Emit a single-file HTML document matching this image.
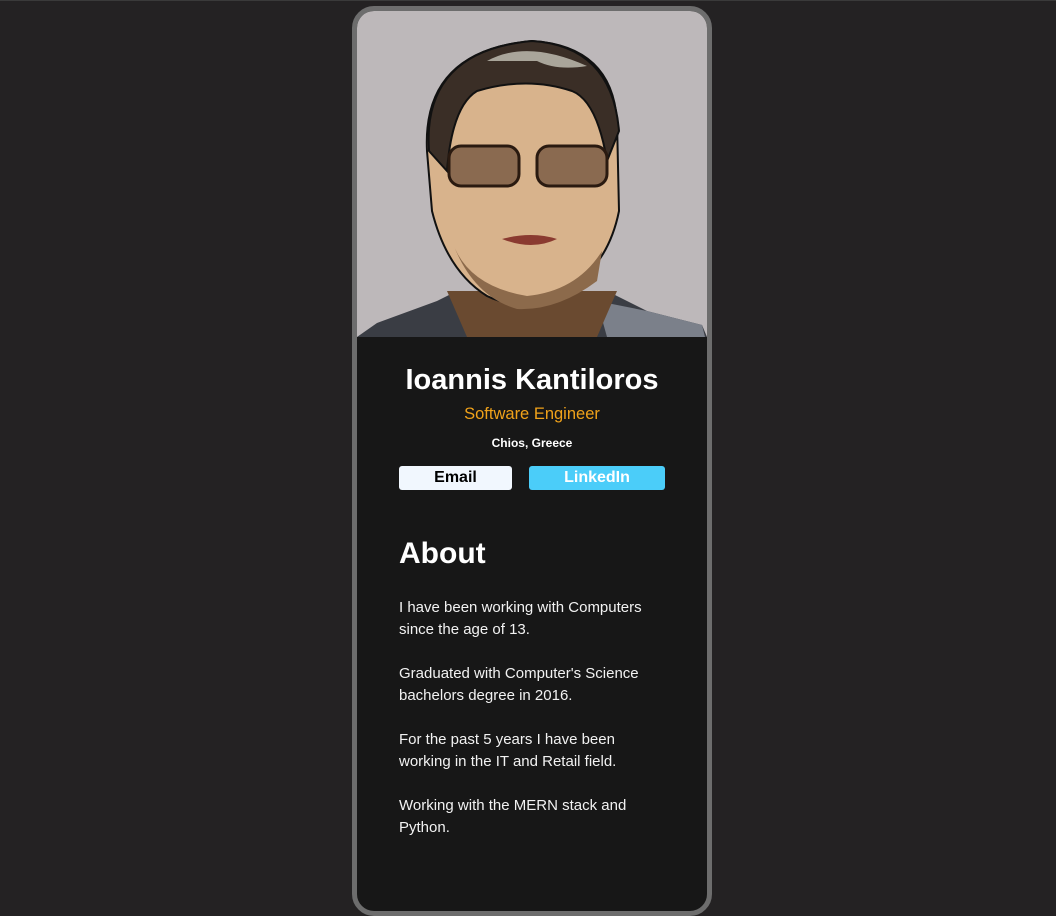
<!DOCTYPE html>
<html><head><style>
html,body{margin:0;padding:0;background:#242223;width:1056px;height:857px;overflow:hidden;font-family:"Liberation Sans",sans-serif}
.top{position:absolute;left:0;top:0;width:1056px;height:1px;background:#3a3a3a}
.card{position:absolute;left:352px;top:6px;width:350px;height:900px;border:5px solid #6d6d6d;border-radius:22px;background:#171717;overflow:hidden}
.photo{position:absolute;left:0;top:0;width:350px;height:326px;background:#bdb8ba}
.name{position:absolute;left:0;width:350px;top:353px;text-align:center;color:#fff;font-size:29px;font-weight:bold}
.t{position:absolute;left:0;width:350px;text-align:center}
.btn{position:absolute;top:455px;height:24px;border-radius:3px;font-weight:bold;font-size:16px;text-align:center;line-height:24px}
.p{position:absolute;left:42px;color:#f2f2f2;font-size:15px;line-height:22px;width:262px}
</style></head><body>
<div class="top"></div>
<div class="card">
<div class="photo">
<svg width="350" height="326" viewBox="0 0 350 326">
<path d="M0 326 L20 312 L80 290 L100 280 L250 280 L290 300 L345 314 L350 326Z" fill="#3a3d44"/>
<path d="M240 290 L290 300 L345 314 L348 326 L250 326Z" fill="#7b808a"/>
<path d="M90 280 L260 280 L240 326 L110 326Z" fill="#6a4a30"/>
<path d="M70 140 Q65 40 175 30 Q255 35 260 110 L262 200 Q250 260 200 285 Q160 300 130 285 Q90 260 75 200Z" fill="#d8b38c" stroke="#111" stroke-width="2"/>
<path d="M72 140 Q65 40 175 30 Q255 35 262 120 L250 150 Q240 90 215 80 Q170 65 120 80 Q95 95 90 160 Z" fill="#3a2e26" stroke="#111" stroke-width="2"/>
<path d="M130 50 Q170 28 230 55 Q200 60 180 50Z" fill="#a9a59a"/>
<path d="M95 230 Q110 275 170 285 Q220 280 245 240 L240 270 Q200 300 160 298 Q115 285 95 230Z" fill="#8c6a4b"/>
<rect x="92" y="135" width="70" height="40" rx="12" fill="#8a6a50" stroke="#2a1a10" stroke-width="3"/>
<rect x="180" y="135" width="70" height="40" rx="12" fill="#8a6a50" stroke="#2a1a10" stroke-width="3"/>
<path d="M145 228 Q175 220 200 228 Q175 240 145 228Z" fill="#8a3a30"/>
</svg>
</div>
<div class="name">Ioannis Kantiloros</div>
<div class="t" style="top:394px;color:#f0a21a;font-size:16.5px">Software Engineer</div>
<div class="t" style="top:425px;color:#fff;font-size:12px;font-weight:bold">Chios, Greece</div>
<div class="btn" style="left:42px;width:113px;background:#f1f7fe;color:#000">Email</div>
<div class="btn" style="left:172px;width:136px;background:#4bcdf9;color:#fff">LinkedIn</div>
<div style="position:absolute;left:42px;top:526px;color:#fff;font-size:30px;font-weight:bold">About</div>
<div class="p" style="top:586px">I have been working with Computers since the age of 13.</div>
<div class="p" style="top:652px">Graduated with Computer's Science bachelors degree in 2016.</div>
<div class="p" style="top:718px">For the past 5 years I have been working in the IT and Retail field.</div>
<div class="p" style="top:784px">Working with the MERN stack and Python.</div>
</div>
</body></html>
